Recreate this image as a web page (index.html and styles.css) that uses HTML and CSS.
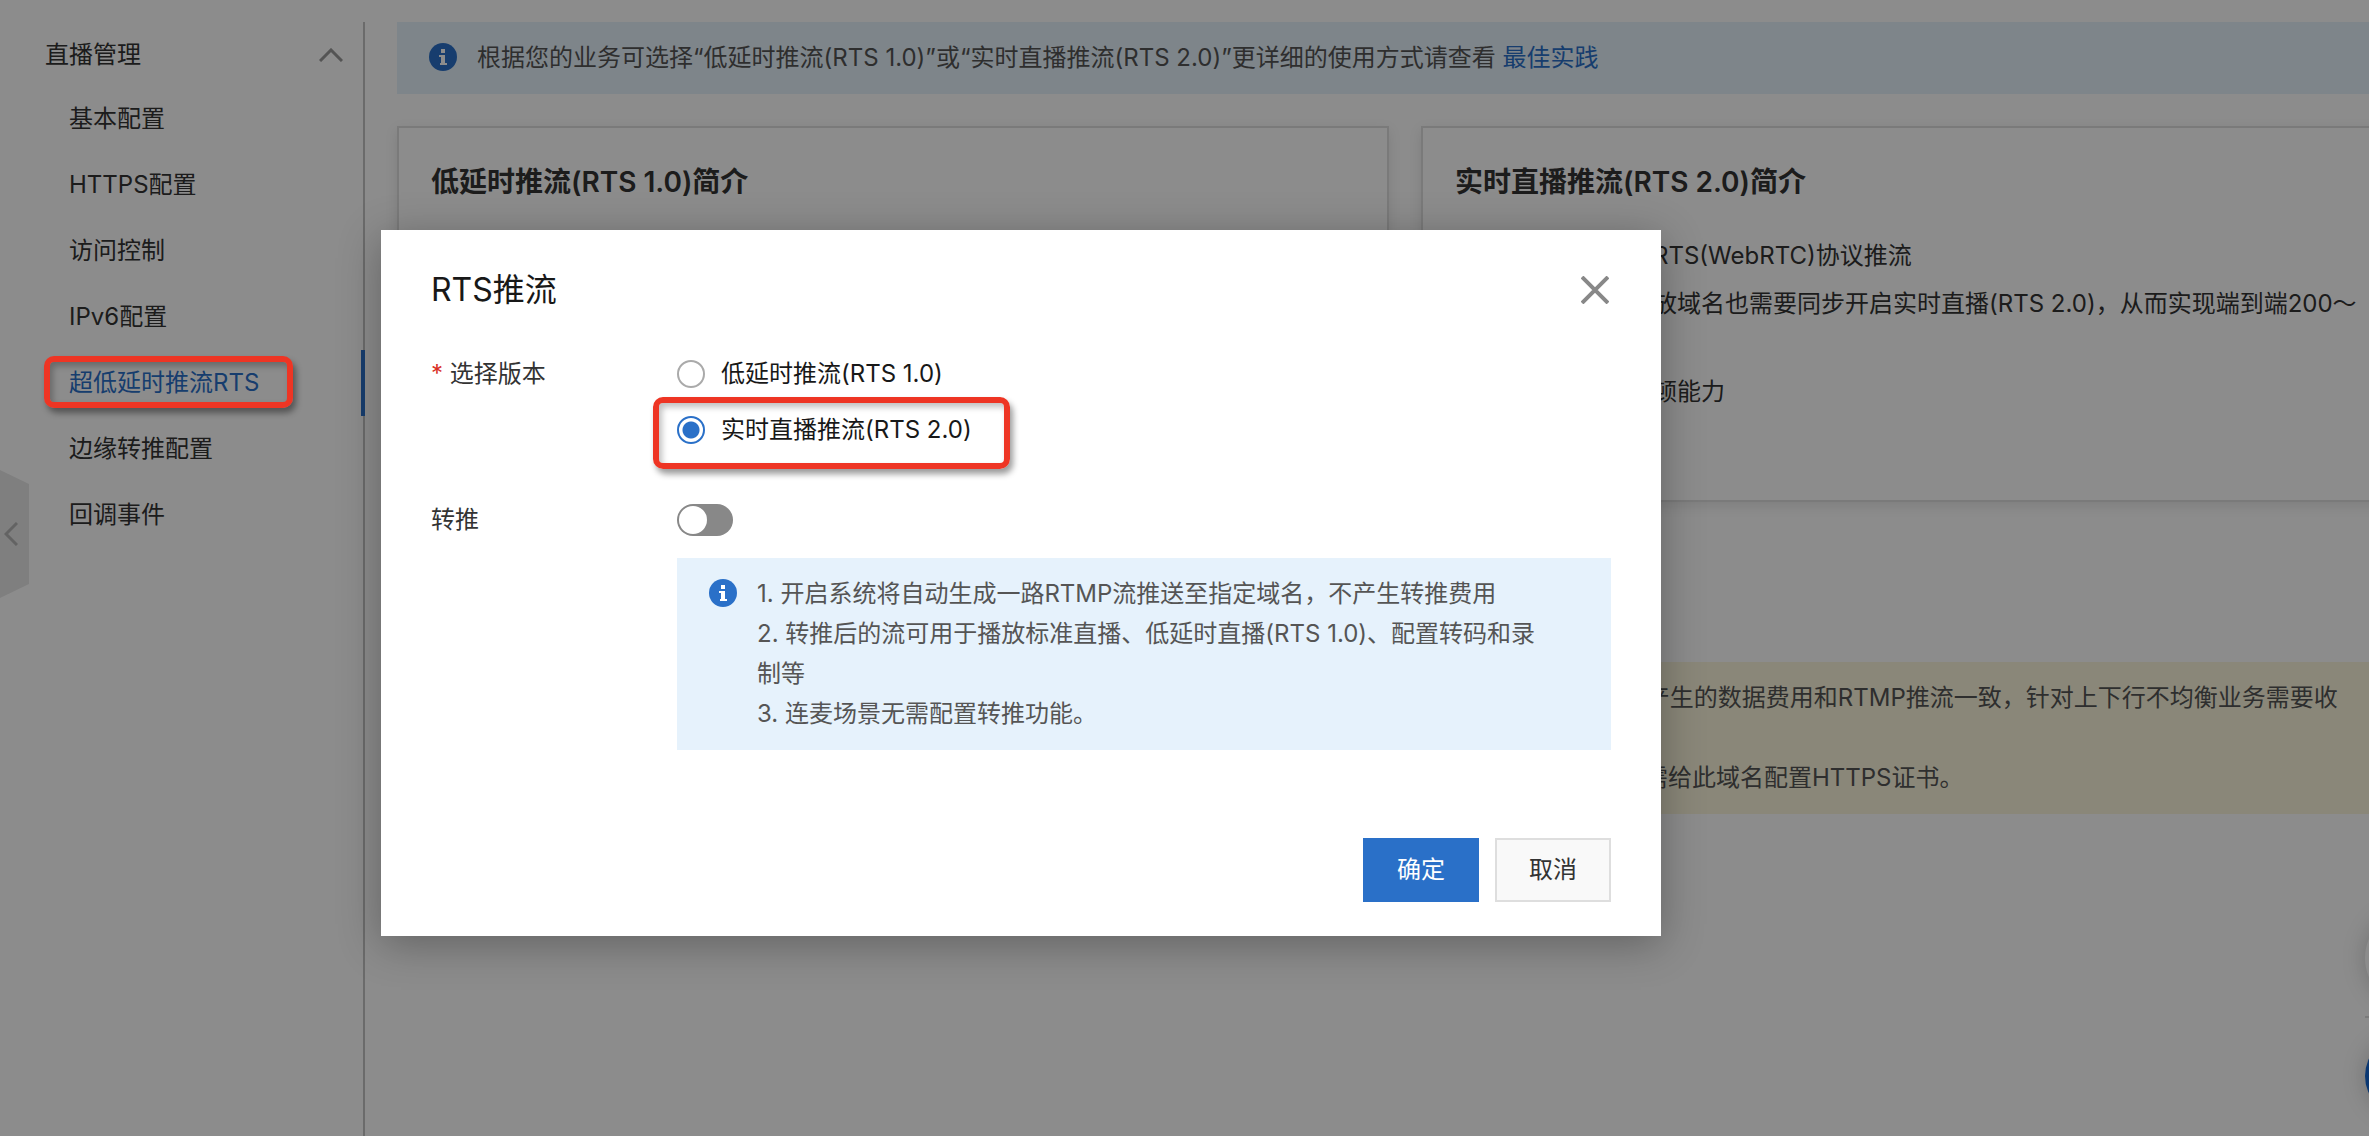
FILE: index.html
```
<!DOCTYPE html>
<html lang="zh-CN">
<head>
<meta charset="utf-8">
<meta name="viewport" content="width=device-width, initial-scale=1">
<title>超低延时推流RTS</title>
<link rel="stylesheet" href="styles.css">
</head>
<body>
<div class="app">
  <aside class="sidebar">
    <button class="group" type="button" aria-expanded="true">
      <span>直播管理</span>
      <svg class="group-arrow" viewBox="0 0 24 14" aria-hidden="true"><path d="M1 13 12 2l11 11"/></svg>
    </button>
    <nav class="menu">
      <a class="menu-item" href="#basic">基本配置</a>
      <a class="menu-item" href="#https">HTTPS配置</a>
      <a class="menu-item" href="#access">访问控制</a>
      <a class="menu-item" href="#ipv6">IPv6配置</a>
      <a class="menu-item is-active" href="#rts" aria-current="page">超低延时推流RTS</a>
      <a class="menu-item" href="#relay">边缘转推配置</a>
      <a class="menu-item" href="#callback">回调事件</a>
    </nav>
    <button class="collapse" type="button" aria-label="收起菜单">
      <svg viewBox="0 0 14 24" aria-hidden="true"><path d="M13 1 2 12l11 11"/></svg>
    </button>
  </aside>

  <main class="main">
    <div class="notice notice-info">
      <svg class="info" viewBox="0 0 28 28" aria-hidden="true"><circle cx="14" cy="14" r="14"/><path d="M12 6h4v4h-4zM10 12h6v8h2v2h-7v-2h1v-6h-2z"/></svg>
      <p>根据您的业务可选择“低延时推流(RTS 1.0)”或“实时直播推流(RTS 2.0)”更详细的使用方式请查看 <a href="#guide">最佳实践</a></p>
    </div>

    <div class="cards">
      <section class="card">
        <h2>低延时推流(RTS 1.0)简介</h2>
      </section>
      <section class="card">
        <h2>实时直播推流(RTS 2.0)简介</h2>
        <ul>
          <li>支持使用标准的RTS(WebRTC)协议推流</li>
          <li>推流开启后，播放域名也需要同步开启实时直播(RTS 2.0)，从而实现端到端200～<br>400ms延时</li>
          <li>极强的抗弱网卡顿能力</li>
        </ul>
      </section>
    </div>

    <div class="notice notice-warn">
      <svg class="info" viewBox="0 0 28 28" aria-hidden="true"><circle cx="14" cy="14" r="14"/><path d="M12 6h4v10h-4zM12 18h4v4h-4z"/></svg>
      <div>
        <p>1. 开启实时直播推流(RTS 2.0) 功能后，客户端通过实时协议将音视频数据推送至直播中心，在此推流的过程中产生的数据费用和RTMP推流一致，针对上下行不均衡业务需要收<br>取额外费用。</p>
        <p>2. 使用实时直播推流(RTS 2.0)功能时，如果业务页面需要在浏览器环境中采集音视频并完成推流操作，那么还需给此域名配置HTTPS证书。</p>
      </div>
    </div>
  </main>

  <div class="floats">
    <button class="float" type="button" aria-label="反馈"></button>
    <hr>
    <button class="float float-help" type="button" aria-label="帮助"></button>
  </div>

  <div class="mask"></div>

  <form class="modal" role="dialog" aria-labelledby="modal-title">
    <header class="modal-head">
      <h1 id="modal-title">RTS推流</h1>
      <button class="close" type="button" aria-label="关闭">
        <svg viewBox="0 0 28 28" aria-hidden="true"><path d="M1 1l26 26M27 1 1 27"/></svg>
      </button>
    </header>

    <div class="fields">
      <div class="label" id="version-label"><span class="required">*</span> 选择版本</div>
      <div class="radios" role="radiogroup" aria-labelledby="version-label">
        <label class="choice"><input type="radio" name="version" value="1">低延时推流(RTS 1.0)</label>
        <label class="choice is-marked"><input type="radio" name="version" value="2" checked>实时直播推流(RTS 2.0)</label>
      </div>

      <label class="label" for="relay-switch">转推</label>
      <div class="relay">
        <input class="switch" id="relay-switch" type="checkbox" role="switch">
        <div class="notice notice-info">
          <svg class="info" viewBox="0 0 28 28" aria-hidden="true"><circle cx="14" cy="14" r="14"/><path d="M12 6h4v4h-4zM10 12h6v8h2v2h-7v-2h1v-6h-2z"/></svg>
          <div>
            <p>1. 开启系统将自动生成一路RTMP流推送至指定域名，不产生转推费用</p>
            <p>2. 转推后的流可用于播放标准直播、低延时直播(RTS 1.0)、配置转码和录制等</p>
            <p>3. 连麦场景无需配置转推功能。</p>
          </div>
        </div>
      </div>
    </div>

    <footer class="actions">
      <button class="btn btn-primary" type="submit">确定</button>
      <button class="btn" type="button">取消</button>
    </footer>
  </form>
</div>
</body>
</html>
```
FILE: styles.css
```
*,
*::before,
*::after {
  box-sizing: border-box;
}

body {
  margin: 0;
  background: #fff;
  color: #333;
  font: 24px/40px Inter, "Noto Sans CJK SC", sans-serif;
}

h1, h2, p, ul {
  margin: 0;
  padding: 0;
}

button, input {
  margin: 0;
  font: inherit;
  color: inherit;
}

a {
  color: #2a70c8;
  text-decoration: none;
}

svg {
  display: block;
  flex: none;
}

svg path {
  fill: none;
  stroke: currentColor;
  stroke-width: 3;
}

.app {
  position: relative;
  display: flex;
  min-height: calc(100vh - 4px);
  padding-top: 22px;
  overflow: hidden;
}

/* Sidebar */
.sidebar {
  flex: none;
  width: 365px;
  border-right: 2px solid #c4c4c4;
}

.group {
  display: flex;
  align-items: center;
  justify-content: space-between;
  width: 100%;
  height: 64px;
  padding: 2px 20px 0 45px;
  border: 0;
  background: none;
}

.group-arrow {
  width: 24px;
  height: 14px;
  color: #999;
}

.menu-item {
  position: relative;
  display: block;
  padding-left: 69px;
  color: #333;
  line-height: 66px;
}

.is-active {
  color: #2a70c8;
}

.is-active::before {
  content: "";
  position: absolute;
  top: 0;
  right: -2px;
  width: 4px;
  height: 100%;
  background: #2a70c8;
}

/* Red callout frames, drawn above the mask */
.is-active::after,
.is-marked::after {
  content: "";
  position: absolute;
  z-index: 5;
  border: 6px solid #ee3524;
  border-radius: 10px;
  box-shadow: 3px 5px 6px rgba(0, 0, 0, .4), inset 3px 4px 6px rgba(0, 0, 0, .25);
}

.is-active::after {
  left: 44px;
  top: 6px;
  width: 249px;
  height: 52px;
}

.collapse {
  position: absolute;
  left: 0;
  top: 470px;
  width: 29px;
  height: 128px;
  padding: 0 0 0 4px;
  border: 0;
  background: #e8e8e8;
  color: #b4b4b4;
  clip-path: polygon(0 0, 100% 14px, 100% 114px, 0 100%);
}

.collapse svg {
  width: 14px;
  height: 24px;
}

/* Content, which runs on past the right edge of the window */
.main {
  flex: 1;
  min-width: 0;
  margin-right: -44px;
  padding-left: 32px;
}

.notice {
  display: flex;
  gap: 20px;
  padding: 16px 48px 16px 32px;
  color: #555;
}

.notice-info {
  background: #e6f2fc;
}

.notice-warn {
  margin-top: 160px;
  background: #fbf6dc;
}

.info {
  width: 28px;
  height: 28px;
  margin-top: 5px;
}

.info circle {
  fill: #2a70c8;
}

.info path {
  fill: #fff;
  stroke: none;
}

.cards {
  display: grid;
  grid-template-columns: 1fr 1fr;
  gap: 32px;
  margin-top: 32px;
}

.card {
  min-height: 376px;
  padding: 34px 32px;
  border: 2px solid #dedede;
  box-shadow: 0 4px 12px rgba(0, 0, 0, .1);
}

.card h2 {
  font-size: 28px;
  font-weight: 600;
}

.card ul {
  margin-top: 34px;
  padding-left: 30px;
}

.card li {
  margin-bottom: 8px;
}

/* Floating tools */
.floats {
  position: absolute;
  left: calc(100% - 4px);
  top: 910px;
  width: 96px;
}

.floats hr {
  margin: 10px 0 18px;
  border: 0;
  border-top: 2px solid #dedede;
}

.float {
  display: block;
  width: 96px;
  height: 96px;
  border: 0;
  border-radius: 50%;
  background: #fff;
  box-shadow: 0 0 24px rgba(0, 0, 0, .2);
}

.float-help {
  width: 80px;
  height: 80px;
  background: #1466d0;
}

.mask {
  position: absolute;
  inset: 0;
  z-index: 2;
  background: rgba(0, 0, 0, .45);
}

/* Dialog */
.modal {
  position: absolute;
  left: 381px;
  top: 230px;
  z-index: 3;
  width: 1280px;
  max-width: calc(100% - 381px);
  padding: 36px 50px 34px;
  background: #fff;
  box-shadow: 0 8px 40px rgba(0, 0, 0, .3);
}

.modal-head {
  display: flex;
  align-items: center;
  justify-content: space-between;
}

.modal-head h1 {
  color: #181818;
  font-size: 32px;
  font-weight: 400;
  line-height: 48px;
}

.close {
  padding: 2px;
  border: 0;
  background: none;
  color: #888;
}

.close svg {
  width: 28px;
  height: 28px;
}

.close path {
  stroke-width: 4;
}

.fields {
  display: grid;
  grid-template-columns: 246px 1fr;
  row-gap: 50px;
  margin-top: 40px;
}

.required {
  color: #d93026;
}

.radios {
  display: grid;
  justify-items: start;
  gap: 16px;
}

.choice {
  position: relative;
  display: flex;
  align-items: center;
  gap: 16px;
  color: #181818;
}

.choice input {
  appearance: none;
  width: 28px;
  height: 28px;
  border: 2px solid #aaa;
  border-radius: 50%;
}

.choice input:checked {
  border-color: #2a70c8;
  background: radial-gradient(circle, #2a70c8 8px, #fff 9px);
}

.is-marked::after {
  left: -24px;
  right: -38px;
  top: -13px;
  height: 72px;
}

.switch {
  appearance: none;
  display: block;
  width: 56px;
  height: 32px;
  margin: 4px 0 22px;
  padding: 2px;
  border-radius: 16px;
  background: #888;
}

.switch::before {
  content: "";
  display: block;
  width: 28px;
  height: 28px;
  border-radius: 50%;
  background: #fff;
}

.switch:checked {
  padding-left: 26px;
  background: #2a70c8;
}

.relay .notice {
  padding-right: 64px;
}

.actions {
  display: flex;
  justify-content: flex-end;
  gap: 16px;
  margin-top: 88px;
}

.btn {
  width: 116px;
  height: 64px;
  padding: 0;
  border: 2px solid #dedede;
  background: #f9f9f9;
}

.btn-primary {
  border-color: #2a70c8;
  background: #2a70c8;
  color: #fff;
}
```
